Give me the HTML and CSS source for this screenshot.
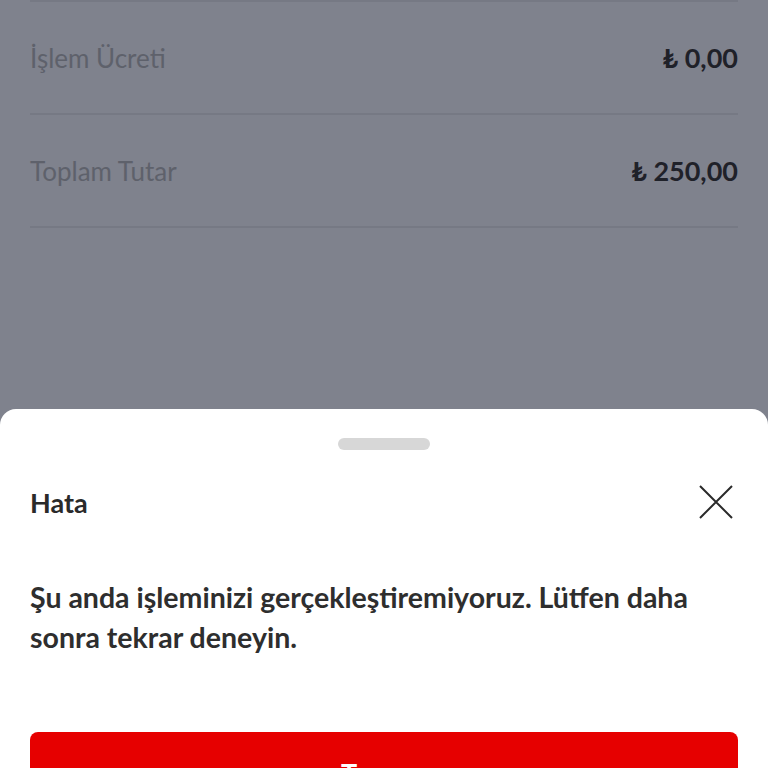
FILE: index.html
```html
<!DOCTYPE html>
<html lang="tr">
<head>
<meta charset="utf-8">
<link rel="stylesheet" href="styles.css">
</head>
<body>
<div class="page">
  <div class="summary">
    <div class="row">
      <span class="label">İşlem Ücreti</span>
      <span class="value">₺ 0,00</span>
    </div>
    <div class="row">
      <span class="label">Toplam Tutar</span>
      <span class="value">₺ 250,00</span>
    </div>
  </div>
  <div class="sheet">
    <div class="handle"></div>
    <div class="sheet-head">
      <h2 class="title">Hata</h2>
      <svg class="close" width="34" height="34" viewBox="0 0 34 34" aria-hidden="true">
        <path d="M1 1 L33 33 M33 1 L1 33" stroke="#2a2a2a" stroke-width="2" fill="none"/>
      </svg>
    </div>
    <p class="message">Şu anda işleminizi gerçekleştiremiyoruz. Lütfen daha sonra tekrar deneyin.</p>
    <button class="primary">Tamam</button>
  </div>
</div>
</body>
</html>
```
FILE: styles.css
```css
html, body {
  margin: 0;
  padding: 0;
}
body {
  width: 768px;
  height: 768px;
  overflow: hidden;
  background: #7f828d;
  font-family: Lato, "Noto Sans", sans-serif;
}
.page {
  display: flex;
  flex-direction: column;
}
.summary {
  display: flex;
  flex-direction: column;
  padding: 0 30px;
  height: 409px;
  flex-shrink: 0;
  box-sizing: border-box;
}
.row {
  display: flex;
  justify-content: space-between;
  align-items: center;
  height: 111px;
  border-top: 2px solid #767984;
}
.row:last-child {
  border-bottom: 2px solid #767984;
}
.label {
  font-size: 26px;
  color: #5e616b;
  font-weight: 400;
}
.value {
  font-size: 27px;
  font-weight: 700;
  color: #1f2129;
}
.sheet {
  background: #fff;
  border-radius: 16px 16px 0 0;
  flex-shrink: 0;
  padding: 29px 30px 40px;
  display: flex;
  flex-direction: column;
}
.handle {
  align-self: center;
  width: 92px;
  height: 12px;
  border-radius: 6px;
  background: #d7d7d7;
}
.sheet-head {
  display: flex;
  justify-content: space-between;
  align-items: center;
  margin-top: 35px;
}
.title {
  margin: 0;
  font-size: 27px;
  font-weight: 700;
  color: #2a2a2a;
}
.close {
  margin-right: 5px;
}
.message {
  margin: 58px 0 0;
  font-size: 28.5px;
  line-height: 40px;
  font-weight: 700;
  color: #2e2e2e;
}
.primary {
  margin-top: 75px;
  height: 80px;
  border: 0;
  border-radius: 8px;
  background: #e60000;
  color: #fff;
  font-family: inherit;
  font-size: 27px;
  font-weight: 700;
  flex-shrink: 0;
}
```
